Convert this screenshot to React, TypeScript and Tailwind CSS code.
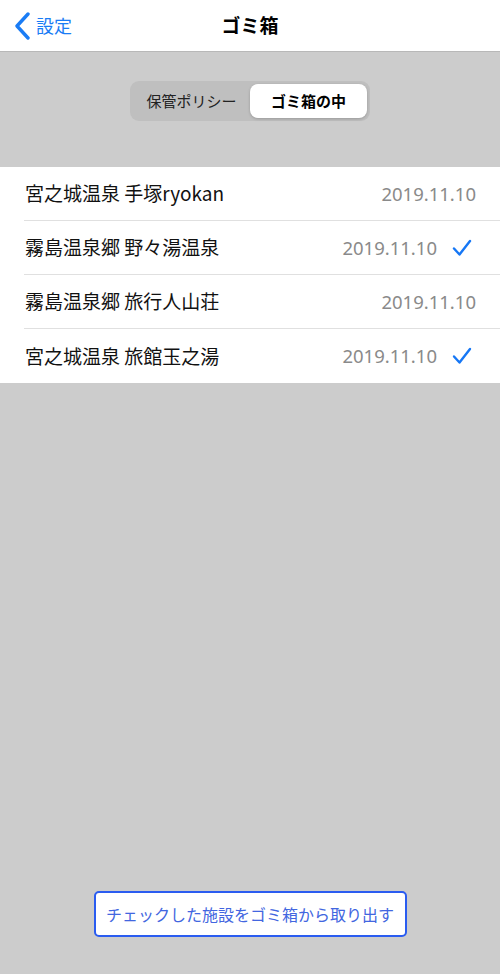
const rows = [
  { name: '宮之城温泉 手塚ryokan', date: '2019.11.10', checked: false },
  { name: '霧島温泉郷 野々湯温泉', date: '2019.11.10', checked: true },
  { name: '霧島温泉郷 旅行人山荘', date: '2019.11.10', checked: false },
  { name: '宮之城温泉 旅館玉之湯', date: '2019.11.10', checked: true },
];

const font = { fontFamily: '"Noto Sans CJK JP", "Noto Sans", sans-serif' };

function Check() {
  return (
    <svg width="20" height="18" viewBox="0 0 20 18" fill="none" className="ml-[15px] mr-[4px]">
      <path d="M2 9.5 L7.5 15.5 L18 2" stroke="#1677f5" strokeWidth="2.4" strokeLinecap="round" strokeLinejoin="round" />
    </svg>
  );
}

function Back() {
  return (
    <svg width="18" height="28" viewBox="0 0 18 28" fill="none">
      <path d="M14 2 L3 14 L14 26" stroke="#1a7cf5" strokeWidth="3.4" strokeLinecap="round" strokeLinejoin="round" />
    </svg>
  );
}

export default function App() {
  return (
    <div className="w-[500px] h-[974px] bg-[#cccccc] flex flex-col" style={font}>
      {/* ナビバー */}
      <div className="h-[52px] bg-white border-b border-[#b8b8b8] relative flex items-center justify-center shrink-0">
        <div className="absolute left-[14px] top-0 h-full flex items-center gap-[4px] text-[#1a7cf5]">
          <Back />
          <span className="text-[18px]">設定</span>
        </div>
        <span className="text-[19px] font-bold text-black">ゴミ箱</span>
      </div>

      {/* セグメント */}
      <div className="flex justify-center pt-[29px]">
        <div className="w-[240px] h-[40px] rounded-[9px] bg-[#bfbfbf] flex items-center p-[3px]">
          <div className="flex-1 text-center text-[15px] text-[#222]">保管ポリシー</div>
          <div className="w-[117px] h-[34px] rounded-[8px] bg-white shadow-[0_1px_3px_rgba(0,0,0,0.2)] flex items-center justify-center text-[15px] font-bold text-black">
            ゴミ箱の中
          </div>
        </div>
      </div>

      {/* リスト */}
      <div className="mt-[46px] bg-white">
        {rows.map((r, i) => (
          <div key={i} className="pl-[24px]">
            <div
              className={[
                'h-[54px] flex items-center pr-[24px]',
                i < rows.length - 1 ? 'border-b border-[#e0e0e0]' : '',
              ].join(' ')}
            >
              <span className="flex-1 text-[19px] text-[#111] pl-[1px]">{r.name}</span>
              <span className="text-[18.5px] text-[#8a8a8a]" style={{ fontFamily: '"Noto Sans", sans-serif' }}>
                {r.date}
              </span>
              {r.checked && <Check />}
            </div>
          </div>
        ))}
      </div>

      <div className="flex-1" />

      {/* ボタン */}
      <div className="flex justify-center pb-[37px]">
        <button
          type="button"
          className="w-[313px] h-[46px] rounded-[5px] border-2 border-[#2a5cf0] bg-white text-[16px] text-[#4266e0]"
        >
          チェックした施設をゴミ箱から取り出す
        </button>
      </div>
    </div>
  );
}
